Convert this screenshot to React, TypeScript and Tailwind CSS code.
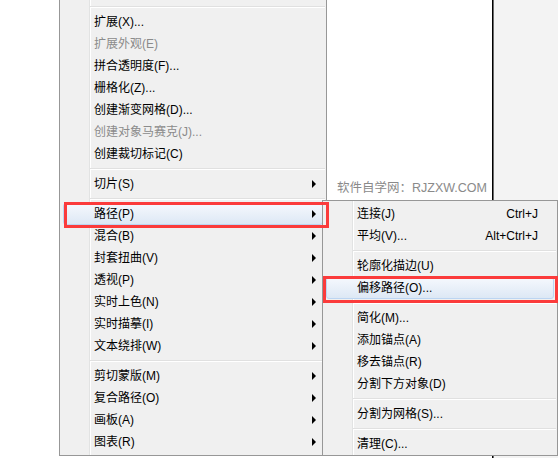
import React from 'react';

type Row =
    | { kind: 'sep' }
    | { kind: 'item'; label: string; disabled?: boolean; arrow?: boolean; shortcut?: string; hover?: boolean };

const mainRows: Row[] = [
    { kind: 'sep' },
    { kind: 'item', label: '扩展(X)...' },
    { kind: 'item', label: '扩展外观(E)', disabled: true },
    { kind: 'item', label: '拼合透明度(F)...' },
    { kind: 'item', label: '栅格化(Z)...' },
    { kind: 'item', label: '创建渐变网格(D)...' },
    { kind: 'item', label: '创建对象马赛克(J)...', disabled: true },
    { kind: 'item', label: '创建裁切标记(C)' },
    { kind: 'sep' },
    { kind: 'item', label: '切片(S)', arrow: true },
    { kind: 'sep' },
    { kind: 'item', label: '路径(P)', arrow: true, hover: true },
    { kind: 'item', label: '混合(B)', arrow: true },
    { kind: 'item', label: '封套扭曲(V)', arrow: true },
    { kind: 'item', label: '透视(P)', arrow: true },
    { kind: 'item', label: '实时上色(N)', arrow: true },
    { kind: 'item', label: '实时描摹(I)', arrow: true },
    { kind: 'item', label: '文本绕排(W)', arrow: true },
    { kind: 'sep' },
    { kind: 'item', label: '剪切蒙版(M)', arrow: true },
    { kind: 'item', label: '复合路径(O)', arrow: true },
    { kind: 'item', label: '画板(A)', arrow: true },
    { kind: 'item', label: '图表(R)', arrow: true },
];

const subRows: Row[] = [
    { kind: 'item', label: '连接(J)', shortcut: 'Ctrl+J' },
    { kind: 'item', label: '平均(V)...', shortcut: 'Alt+Ctrl+J' },
    { kind: 'sep' },
    { kind: 'item', label: '轮廓化描边(U)' },
    { kind: 'item', label: '偏移路径(O)...', hover: true },
    { kind: 'sep' },
    { kind: 'item', label: '简化(M)...' },
    { kind: 'item', label: '添加锚点(A)' },
    { kind: 'item', label: '移去锚点(R)' },
    { kind: 'item', label: '分割下方对象(D)' },
    { kind: 'sep' },
    { kind: 'item', label: '分割为网格(S)...' },
    { kind: 'sep' },
    { kind: 'item', label: '清理(C)...' },
];

function MenuRows({ rows, padRight }: { rows: Row[]; padRight: string }) {
    return (
        <>
            {rows.map((r, i) =>
                r.kind === 'sep' ? (
                    <div key={i} className="h-[8px] flex flex-col justify-center ml-[30px] mr-[1px]">
                        <div className="h-px bg-[#e0e0e0]" />
                        <div className="h-px bg-white" />
                    </div>
                ) : (
                    <div
                        key={i}
                        className={
                            'mx-[3px] h-[22px] flex items-center pl-[30px] border rounded-[3px] ' +
                            padRight +
                            (r.hover
                                ? ' border-[#bcd5f2] bg-linear-to-b from-[#f5f8fd] to-[#dde8f5]'
                                : ' border-transparent')
                        }
                    >
                        <span className={r.disabled ? 'text-[#8b8b8b]' : 'text-black'}>{r.label}</span>
                        <span className="flex-1" />
                        {r.shortcut && <span className="text-black">{r.shortcut}</span>}
                        {r.arrow && (
                            <span className="w-0 h-0 border-y-[4px] border-y-transparent border-l-[4px] border-l-black" />
                        )}
                    </div>
                )
            )}
        </>
    );
}

export default function App() {
    return (
        <div className="relative w-[558px] h-[458px] overflow-hidden bg-white text-[12px] leading-none font-['Liberation_Sans','Noto_Sans_CJK_SC',sans-serif]">
            {/* desktop behind the menus */}
            <div className="flex h-full">
                <div className="w-[492px] bg-white pl-[337px] pt-[182px] whitespace-nowrap text-[12.5px] text-[#8a8a8a]">
                    软件自学网：RJZXW.COM
                </div>
                <div className="w-px bg-black" />
                <div className="w-px bg-[#6a6a6a]" />
                <div className="flex-1 bg-[#f3f3f3]" />
            </div>

            {/* main menu */}
            <div className="absolute left-[59px] top-0 w-[268px] border-x border-b border-[#979797] pt-[3px] pb-[2px] bg-[linear-gradient(to_right,#f0f0f0_29px,#e2e3e3_29px,#e2e3e3_30px,#ffffff_30px,#ffffff_31px,#f0f0f0_31px)]">
                <MenuRows rows={mainRows} padRight="pr-[6px]" />
            </div>

            {/* path submenu */}
            <div className="absolute left-[322px] top-[200px] w-[236px] border border-[#979797] pt-[2px] bg-[linear-gradient(to_right,#f0f0f0_29px,#e2e3e3_29px,#e2e3e3_30px,#ffffff_30px,#ffffff_31px,#f0f0f0_31px)]">
                <MenuRows rows={subRows} padRight="pr-[15px]" />
            </div>

            {/* red annotation boxes */}
            <div className="absolute left-[64px] top-[202px] w-[265px] h-[26px] border-[3px] border-[#fb3b3b] pointer-events-none" />
            <div className="absolute left-[323px] top-[276px] w-[235px] h-[27px] border-[3px] border-[#fb3b3b] pointer-events-none" />
        </div>
    );
}
